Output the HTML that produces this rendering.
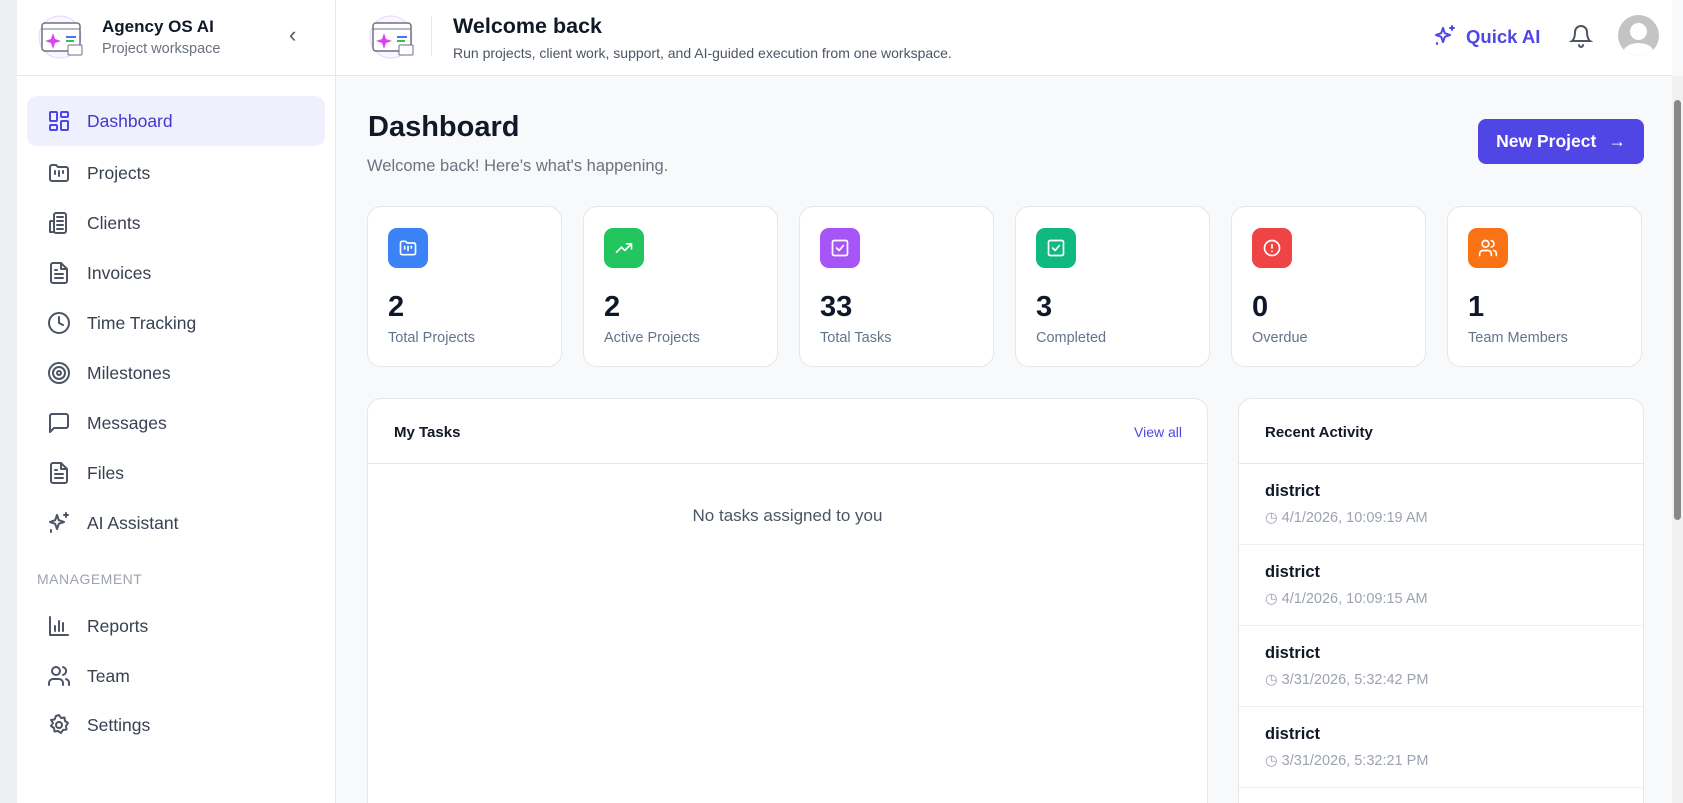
<!DOCTYPE html>
<html><head><meta charset="utf-8"><style>
*{box-sizing:border-box;margin:0;padding:0}
html{width:1683px;height:803px;overflow:hidden}
body{width:1683px;height:803px;overflow:hidden;font-family:"Liberation Sans",sans-serif;background:#f8f9fb;position:relative;color:#111827}
.strip{position:absolute;left:0;top:0;width:17px;height:803px;background:#eeeff2}
.side{position:absolute;left:17px;top:0;width:319px;height:803px;background:#fff;border-right:1px solid #e5e7eb}
.top{position:absolute;left:336px;top:0;right:11px;height:76px;background:#fff;border-bottom:1px solid #e5e7eb}
.sbhead{height:76px;border-bottom:1px solid #e5e7eb;position:relative}
.nav{position:absolute;left:10px;width:298px;height:50px;display:flex;align-items:center;font-size:17.5px;color:#374151;border-radius:10px}
.nav svg{margin-left:20px;margin-right:16px;width:24px;height:24px;fill:none;stroke:#4b5563;stroke-width:2;stroke-linecap:round;stroke-linejoin:round}
.nav.act{background:#eef0fd;color:#4338ca}
.nav.act svg{stroke:#4f46e5}
.card{position:absolute;background:#fff;border:1px solid #e5e7eb;border-radius:14px}
.stat{top:206px;width:195px;height:161px}
.ib{position:absolute;left:20px;top:21px;width:40px;height:40px;border-radius:9px;display:flex;align-items:center;justify-content:center}
.ib svg{width:20px;height:20px;fill:none;stroke:#fff;stroke-width:2;stroke-linecap:round;stroke-linejoin:round}
.num{position:absolute;left:20px;top:84px;font-size:29px;font-weight:bold;color:#0f172a}
.lbl{position:absolute;left:20px;top:123px;font-size:14.5px;color:#64748b}
.act-item{position:absolute;left:0;right:0;height:81px;border-bottom:1px solid #eef0f3}
.act-item b{position:absolute;left:26px;top:18px;font-size:16.5px;color:#111827;font-weight:600}
.act-item span{position:absolute;left:26px;top:46px;font-size:14.5px;color:#9ca3af;display:flex;align-items:center;gap:5px}
</style></head><body>
<div class="strip"></div>
<div class="side">
 <div class="sbhead">
  <svg style="position:absolute;left:21px;top:13px" width="50" height="46" viewBox="0 0 50 46"><circle cx="22" cy="24" r="21" fill="#faf5ff" stroke="#e9d5ff"/><rect x="4" y="10" width="38" height="28" rx="3" fill="#fff" stroke="#6b7280" stroke-width="1.5"/><line x1="4" y1="16" x2="42" y2="16" stroke="#6b7280"/><path d="M15 20 L17 26 L23 28 L17 30 L15 36 L13 30 L7 28 L13 26Z" fill="#d946ef"/><line x1="28" y1="24" x2="38" y2="24" stroke="#6366f1" stroke-width="2"/><line x1="28" y1="28" x2="36" y2="28" stroke="#22c55e" stroke-width="2"/><rect x="30" y="32" width="14" height="10" rx="1" fill="#fff" stroke="#6b7280"/></svg>
  <div style="position:absolute;left:85px;top:17px;font-size:17px;font-weight:600">Agency OS AI</div>
  <div style="position:absolute;left:85px;top:41px;font-size:14.5px;color:#6b7280">Project workspace</div>
  <div style="position:absolute;left:272px;top:22px;font-size:22px;color:#4b5563">‹</div>
 </div>
 <div class="nav act" style="top:96px"><svg viewBox="0 0 24 24"><rect x="3" y="3" width="7" height="9" rx="1"/><rect x="14" y="3" width="7" height="5" rx="1"/><rect x="14" y="12" width="7" height="9" rx="1"/><rect x="3" y="16" width="7" height="5" rx="1"/></svg>Dashboard</div>
 <div class="nav" style="top:148px"><svg viewBox="0 0 24 24"><path d="M3 6a2 2 0 0 1 2-2h4l2 2h8a2 2 0 0 1 2 2v10a2 2 0 0 1-2 2H5a2 2 0 0 1-2-2z"/><path d="M8 10v3M12 10v5M16 10v2"/></svg>Projects</div>
 <div class="nav" style="top:198px"><svg viewBox="0 0 24 24"><rect x="7" y="2" width="12" height="20" rx="2"/><path d="M7 10H4a1 1 0 0 0-1 1v10h4M10 6h6M10 10h6M10 14h6M10 18h6"/></svg>Clients</div>
 <div class="nav" style="top:248px"><svg viewBox="0 0 24 24"><path d="M14 2H6a2 2 0 0 0-2 2v16a2 2 0 0 0 2 2h12a2 2 0 0 0 2-2V8z"/><path d="M14 2v6h6M8 13h8M8 17h8M8 9h2"/></svg>Invoices</div>
 <div class="nav" style="top:298px"><svg viewBox="0 0 24 24"><circle cx="12" cy="12" r="10"/><path d="M12 6v6l4 2"/></svg>Time Tracking</div>
 <div class="nav" style="top:348px"><svg viewBox="0 0 24 24"><circle cx="12" cy="12" r="10"/><circle cx="12" cy="12" r="6"/><circle cx="12" cy="12" r="2"/></svg>Milestones</div>
 <div class="nav" style="top:398px"><svg viewBox="0 0 24 24"><path d="M21 15a2 2 0 0 1-2 2H7l-4 4V5a2 2 0 0 1 2-2h14a2 2 0 0 1 2 2z"/></svg>Messages</div>
 <div class="nav" style="top:448px"><svg viewBox="0 0 24 24"><path d="M14 2H6a2 2 0 0 0-2 2v16a2 2 0 0 0 2 2h12a2 2 0 0 0 2-2V8z"/><path d="M14 2v6h6M8 13h8M8 17h8M8 9h2"/></svg>Files</div>
 <div class="nav" style="top:498px"><svg viewBox="0 0 24 24"><path d="M10 4l1.8 5.2L17 11l-5.2 1.8L10 18l-1.8-5.2L3 11l5.2-1.8z"/><path d="M19 2v4M17 4h4M4 19v2"/></svg>AI Assistant</div>
 <div style="position:absolute;left:20px;top:571px;font-size:14px;color:#9ca3af;letter-spacing:.5px">MANAGEMENT</div>
 <div class="nav" style="top:601px"><svg viewBox="0 0 24 24"><path d="M3 3v18h18M8 17v-5M12 17V7M16 17v-8"/></svg>Reports</div>
 <div class="nav" style="top:651px"><svg viewBox="0 0 24 24"><circle cx="9" cy="7" r="4"/><path d="M2 21v-2a4 4 0 0 1 4-4h6a4 4 0 0 1 4 4v2M16 3.1a4 4 0 0 1 0 7.8M22 21v-2a4 4 0 0 0-3-3.9"/></svg>Team</div>
 <div class="nav" style="top:700px"><svg viewBox="0 0 24 24"><circle cx="12" cy="12" r="3"/><path d="M12 2l2 3 3.5-.5.5 3.5 3 2-2 3 .5 3.5-3.5.5-2 3-3-2-3.5.5-.5-3.5-3-2 2-3L4 7l3.5-.5L9 3z"/></svg>Settings</div>
</div>
<div class="top">
 <svg style="position:absolute;left:33px;top:13px" width="50" height="46" viewBox="0 0 50 46"><circle cx="22" cy="24" r="21" fill="#faf5ff" stroke="#e9d5ff"/><rect x="4" y="10" width="38" height="28" rx="3" fill="#fff" stroke="#6b7280" stroke-width="1.5"/><line x1="4" y1="16" x2="42" y2="16" stroke="#6b7280"/><path d="M15 20 L17 26 L23 28 L17 30 L15 36 L13 30 L7 28 L13 26Z" fill="#d946ef"/><line x1="28" y1="24" x2="38" y2="24" stroke="#6366f1" stroke-width="2"/><line x1="28" y1="28" x2="36" y2="28" stroke="#22c55e" stroke-width="2"/><rect x="30" y="32" width="14" height="10" rx="1" fill="#fff" stroke="#6b7280"/></svg>
 <div style="position:absolute;left:95px;top:16px;width:1px;height:40px;background:#e5e7eb"></div>
 <div style="position:absolute;left:117px;top:14px;font-size:21.5px;font-weight:600">Welcome back</div>
 <div style="position:absolute;left:117px;top:45px;font-size:14px;color:#4b5563">Run projects, client work, support, and AI-guided execution from one workspace.</div>
 <svg style="position:absolute;left:1097px;top:24px" width="24" height="24" viewBox="0 0 24 24" fill="none" stroke="#4f46e5" stroke-width="2" stroke-linecap="round" stroke-linejoin="round"><path d="M10 4l1.8 5.2L17 11l-5.2 1.8L10 18l-1.8-5.2L3 11l5.2-1.8z"/><path d="M19 2v4M17 4h4M4 19v1"/></svg>
 <div style="position:absolute;left:1130px;top:26px;font-size:18.5px;color:#4f46e5;font-weight:600">Quick AI</div>
 <svg style="position:absolute;left:1233px;top:24px" width="24" height="24" viewBox="0 0 24 24" fill="none" stroke="#4b5563" stroke-width="2" stroke-linecap="round"><path d="M6 8a6 6 0 0 1 12 0c0 7 3 9 3 9H3s3-2 3-9M10 21a2 2 0 0 0 4 0"/></svg>
 <div style="position:absolute;left:1282px;top:15px;width:41px;height:41px;border-radius:50%;background:#c4c4c4;overflow:hidden"><div style="position:absolute;left:12px;top:8px;width:17px;height:17px;border-radius:50%;background:#fff"></div><div style="position:absolute;left:5px;top:28px;width:31px;height:20px;border-radius:50%;background:#fff"></div></div>
</div>
<div style="position:absolute;left:1672px;top:76px;width:11px;height:727px;background:#f1f1f1"><div style="position:absolute;left:2px;top:24px;width:7px;height:420px;background:#888;border-radius:4px"></div></div>
<div style="position:absolute;left:368px;top:111px;font-size:29px;font-weight:bold;color:#111827">Dashboard</div>
<div style="position:absolute;left:367px;top:157px;font-size:16.5px;color:#6b7280">Welcome back! Here's what's happening.</div>
<div style="position:absolute;left:1478px;top:119px;width:166px;height:45px;background:#4f46e5;border-radius:8px;color:#fff;font-size:17.5px;font-weight:600;display:flex;align-items:center;justify-content:center;gap:12px">New Project <span>→</span></div>

<div class="card stat" style="left:367px"><div class="ib" style="background:#3b82f6"><svg viewBox="0 0 24 24"><path d="M3 6a2 2 0 0 1 2-2h4l2 2h8a2 2 0 0 1 2 2v10a2 2 0 0 1-2 2H5a2 2 0 0 1-2-2z"/><path d="M8 10v3M12 10v5M16 10v2"/></svg></div><div class="num">2</div><div class="lbl">Total Projects</div></div>
<div class="card stat" style="left:583px"><div class="ib" style="background:#22c55e"><svg viewBox="0 0 24 24"><path d="M3 17l6-6 4 4 8-8M15 7h6v6"/></svg></div><div class="num">2</div><div class="lbl">Active Projects</div></div>
<div class="card stat" style="left:799px"><div class="ib" style="background:#a855f7"><svg viewBox="0 0 24 24"><rect x="3" y="3" width="18" height="18" rx="2"/><path d="M8 12l3 3 5-6"/></svg></div><div class="num">33</div><div class="lbl">Total Tasks</div></div>
<div class="card stat" style="left:1015px"><div class="ib" style="background:#10b981"><svg viewBox="0 0 24 24"><rect x="3" y="3" width="18" height="18" rx="2"/><path d="M8 12l3 3 5-6"/></svg></div><div class="num">3</div><div class="lbl">Completed</div></div>
<div class="card stat" style="left:1231px"><div class="ib" style="background:#ef4444"><svg viewBox="0 0 24 24"><circle cx="12" cy="12" r="9"/><path d="M12 8v4M12 16h.01"/></svg></div><div class="num">0</div><div class="lbl">Overdue</div></div>
<div class="card stat" style="left:1447px"><div class="ib" style="background:#f97316"><svg viewBox="0 0 24 24"><circle cx="9" cy="7" r="4"/><path d="M2 21v-2a4 4 0 0 1 4-4h6a4 4 0 0 1 4 4v2M16 3.1a4 4 0 0 1 0 7.8M22 21v-2a4 4 0 0 0-3-3.9"/></svg></div><div class="num">1</div><div class="lbl">Team Members</div></div>

<div class="card" style="left:367px;top:398px;width:841px;height:420px">
 <div style="height:65px;border-bottom:1px solid #e5e7eb;position:relative"><div style="position:absolute;left:26px;top:25px;font-size:15px;font-weight:600">My Tasks</div><div style="position:absolute;right:25px;top:25px;font-size:14px;color:#4f46e5">View all</div></div>
 <div style="text-align:center;margin-top:42px;font-size:17px;color:#4b5563">No tasks assigned to you</div>
</div>
<div class="card" style="left:1238px;top:398px;width:406px;height:420px;overflow:hidden">
 <div style="height:65px;border-bottom:1px solid #e5e7eb;position:relative"><div style="position:absolute;left:26px;top:25px;font-size:15px;font-weight:600">Recent Activity</div></div>
 <div class="act-item" style="top:65px"><b>district</b><span>◷ 4/1/2026, 10:09:19 AM</span></div>
 <div class="act-item" style="top:146px"><b>district</b><span>◷ 4/1/2026, 10:09:15 AM</span></div>
 <div class="act-item" style="top:227px"><b>district</b><span>◷ 3/31/2026, 5:32:42 PM</span></div>
 <div class="act-item" style="top:308px"><b>district</b><span>◷ 3/31/2026, 5:32:21 PM</span></div>
</div>
</body></html>
